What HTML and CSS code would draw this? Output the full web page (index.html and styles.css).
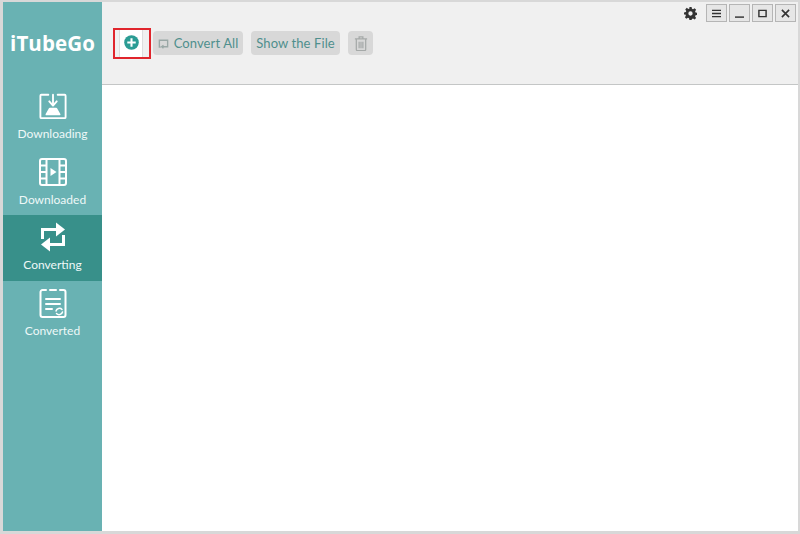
FILE: index.html
```html
<!DOCTYPE html>
<html lang="en">
<head>
<meta charset="utf-8">
<title>iTubeGo</title>
<link rel="stylesheet" href="styles.css">
</head>
<body>
<div class="window">
  <aside class="sidebar">
    <div class="logo">iTubeGo</div>
    <nav class="nav">
      <div class="nav-item">
        <svg class="nav-icon" viewBox="0 0 30 30" fill="none" stroke="#fff" stroke-width="2" stroke-linecap="round" stroke-linejoin="round">
          <path d="M10 3H2.500a1 1 0 0 0-1 1v23a1 1 0 0 0 1 1h25a1 1 0 0 0 1-1V4a1 1 0 0 0-1-1H20"/>
          <path d="M15 3v10"/><path d="M11 10l4 4.500 4-4.500"/>
          <path d="M11.500 18h7l3.500 6H8z" fill="#fff"/>
        </svg>
        <span class="nav-label">Downloading</span>
      </div>
      <div class="nav-item">
        <svg class="nav-icon" viewBox="0 0 28 30" fill="none" stroke="#fff" stroke-width="2" stroke-linejoin="round">
          <rect x="1" y="2" width="26" height="26" rx="2"/>
          <path d="M7.500 2v26M20.500 2v26M1 8.500h6.500M1 15h6.500M1 21.500h6.500M20.500 8.500H27M20.500 15H27M20.500 21.500H27"/>
          <path d="M11.500 11l6 4-6 4z" fill="#fff" stroke="none"/>
        </svg>
        <span class="nav-label">Downloaded</span>
      </div>
      <div class="nav-item active">
        <svg class="nav-icon" viewBox="0 0 28 30" fill="none" stroke="#fff" stroke-width="3">
          <path d="M3.500 17V7.500h14"/><path d="M24.500 13v9.500h-14"/>
          <path d="M17 0.500L26 7.500 17 14.500z" fill="#fff" stroke="none"/>
          <path d="M11 15.500L2 22.500 11 29.500z" fill="#fff" stroke="none"/>
        </svg>
        <span class="nav-label">Converting</span>
      </div>
      <div class="nav-item">
        <svg class="nav-icon" viewBox="0 0 28 30" fill="none" stroke="#fff" stroke-width="2" stroke-linecap="round" stroke-linejoin="round">
          <path d="M7 2H3.500a2 2 0 0 0-2 2v23a2 2 0 0 0 2 2h21a2 2 0 0 0 2-2V4a2 2 0 0 0-2-2H21"/>
          <path d="M11 2h6"/>
          <path d="M7 11h14M7 16h14M7 21h6"/>
          <path d="M17 23a3.500 3.500 0 0 1 6-1.500M23.500 24a3.500 3.500 0 0 1-6 1.500" stroke-width="1.500"/>
        </svg>
        <span class="nav-label">Converted</span>
      </div>
    </nav>
  </aside>
  <main class="main">
    <header class="toolbar">
      <div class="actions">
        <div class="add-frame">
          <div class="add-btn">
            <svg class="add-icon" viewBox="0 0 16 16">
              <circle cx="8" cy="8" r="7.800" fill="#2b9c94"/>
              <path d="M8 3.500v9M3.500 8h9" stroke="#fff" stroke-width="2.200"/>
            </svg>
          </div>
        </div>
        <button class="btn convert">
          <svg class="convert-icon" viewBox="0 0 12 12" fill="none" stroke="#9aa8a6" stroke-width="1.500">
            <path d="M3 10H1.500V2.500h9V9.500H5"/><path d="M6 8l-2 1.500L6 11"/>
          </svg>
          Convert All
        </button>
        <button class="btn show">Show the File</button>
        <button class="btn trash">
          <svg class="trash-icon" viewBox="0 0 14 16" fill="none" stroke="#a5a9a8" stroke-width="1.300">
            <path d="M0.500 3h13M5 3V1h4v2M2 3v11.500a1 1 0 0 0 1 1h8a1 1 0 0 0 1-1V3M5 6v7M7 6v7M9 6v7"/>
          </svg>
        </button>
      </div>
      <div class="win-controls">
        <svg class="gear" viewBox="0 0 24 24"><path fill="#333" fill-rule="evenodd" d="M10 0h4l.7 3.400 2 .8 2.900-1.900 2.800 2.800-1.900 2.900.8 2 3.400.7v4l-3.400.7-.8 2 1.900 2.900-2.800 2.800-2.900-1.900-2 .8L14 24h-4l-.7-3.400-2-.8-2.900 1.900-2.800-2.800 1.900-2.900-.8-2L0 14v-4l3.400-.7.800-2-1.900-2.900 2.800-2.800 2.900 1.900 2-.8zM12 8a4 4 0 1 0 0 8 4 4 0 0 0 0-8z"/></svg>
        <div class="win-btn"><svg class="win-icon" viewBox="0 0 10 10" stroke="#333" stroke-width="1.400"><path d="M0 1.500h10M0 5h10M0 8.500h10"/></svg></div>
        <div class="win-btn"><svg class="win-icon" viewBox="0 0 10 10" stroke="#333" stroke-width="1.600"><path d="M0 9h10"/></svg></div>
        <div class="win-btn"><svg class="win-icon" viewBox="0 0 10 10" fill="none" stroke="#333" stroke-width="1.600"><path d="M1 1.500h8v7H1z"/></svg></div>
        <div class="win-btn"><svg class="win-icon" viewBox="0 0 10 10" stroke="#333" stroke-width="1.800"><path d="M1 1l8 8M9 1l-8 8"/></svg></div>
      </div>
    </header>
    <section class="content"></section>
  </main>
</div>
</body>
</html>
```
FILE: styles.css
```css
html, body {
  margin: 0;
  height: 100%;
  overflow: hidden;
}
body {
  background: #d8d8d8;
  font-family: "Lato", "Open Sans", "Liberation Sans", sans-serif;
}
.window {
  box-sizing: border-box;
  width: 800px;
  height: 534px;
  padding: 2px 2px 3px 3px;
  display: flex;
}
.sidebar {
  width: 99px;
  flex: none;
  background: #69b2b3;
  color: #fff;
  display: flex;
  flex-direction: column;
}
.logo {
  height: 82px;
  display: flex;
  align-items: center;
  justify-content: center;
  font-family: "Open Sans", sans-serif;
  font-size: 20.500px;
  font-weight: 700;
  letter-spacing: 0.100px;
  box-sizing: border-box;
}
.nav {
  display: flex;
  flex-direction: column;
}
.nav-item {
  height: 65.500px;
  box-sizing: border-box;
  display: flex;
  flex-direction: column;
  align-items: center;
  padding-top: 7px;
}
.nav-item.active {
  background: #38908a;
}
.nav-icon {
  width: 28px;
  height: 30px;
  display: block;
}
.nav-label {
  font-size: 12px;
  line-height: 18px;
  margin-top: 4px;
  color: #eef8f8;
}
.main {
  flex: 1;
  display: flex;
  flex-direction: column;
  min-width: 0;
}
.toolbar {
  height: 83px;
  box-sizing: border-box;
  background: #f0f0f0;
  border-bottom: 1px solid #c4c6c6;
  display: flex;
  justify-content: space-between;
  align-items: flex-start;
  padding: 2px 2px 0 0;
}
.actions {
  display: flex;
  align-items: flex-start;
  margin: 24px 0 0 11px;
}
.add-frame {
  box-sizing: border-box;
  width: 38px;
  height: 31px;
  border: 2px solid #e0252c;
  padding: 0 6px 0 4px;
  margin-right: 2px;
}
.add-btn {
  height: 100%;
  background: #fff;
  border-left: 1px solid #ddd;
  border-right: 1px solid #ddd;
  display: flex;
  align-items: center;
  justify-content: center;
}
.add-icon {
  width: 15px;
  height: 15px;
  display: block;
  margin-top: -2px;
}
.btn {
  font-family: inherit;
  font-size: 13px;
  letter-spacing: 0.100px;
  color: #4f8f8d;
  background: #d8d8d8;
  border: 0;
  border-radius: 4px;
  height: 24px;
  margin-top: 3px;
  padding: 0;
  margin-right: 8px;
  display: flex;
  align-items: center;
  justify-content: center;
  white-space: nowrap;
}
.convert {
  width: 90px;
}
.show {
  width: 89px;
}
.convert-icon {
  width: 11px;
  height: 11px;
  margin-right: 5px;
}
.trash {
  width: 25px;
}
.trash-icon {
  width: 14px;
  height: 15px;
}
.win-controls {
  display: flex;
  align-items: center;
  gap: 2px;
}
.gear {
  width: 13px;
  height: 13px;
  margin-right: 7px;
}
.win-btn {
  box-sizing: border-box;
  width: 21px;
  height: 18px;
  background: #e6e6e6;
  border: 1px solid #b5b5b5;
  display: flex;
  align-items: center;
  justify-content: center;
}
.win-icon {
  width: 9px;
  height: 9px;
  display: block;
}
.content {
  flex: 1;
  background: #fff;
}
```
